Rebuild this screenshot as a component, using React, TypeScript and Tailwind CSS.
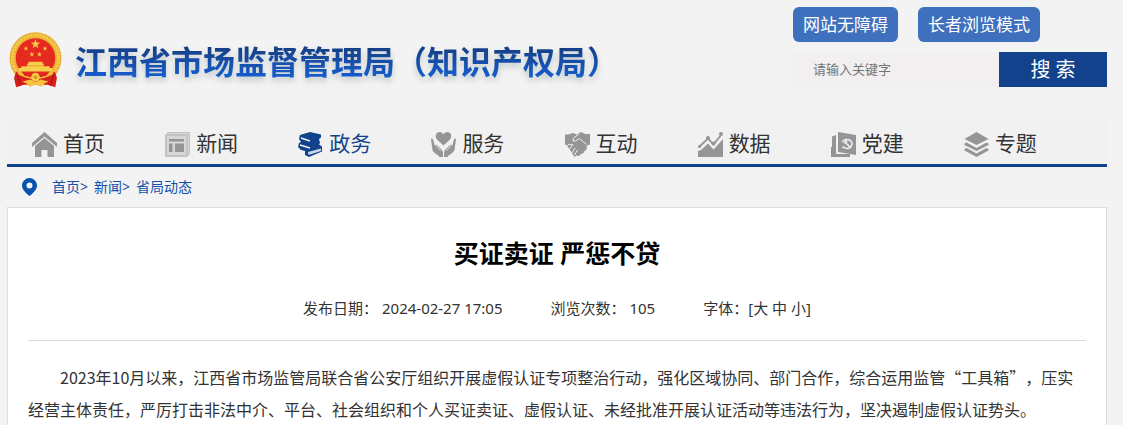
import type { ReactNode } from "react";

type NavItem = { title: string; icon: ReactNode; active?: boolean };

function Icon({ children }: { children: ReactNode }) {
  return (
    <svg
      viewBox="0 0 25 25"
      className="size-[25px] shrink-0"
      fill="currentColor"
      aria-hidden="true"
    >
      {children}
    </svg>
  );
}

const navItems: NavItem[] = [
  {
    title: "首页",
    icon: (
      <Icon>
        <path d="M12.500 0 25 11v4L12.500 4.500 0 15v-4Z" />
        <path d="M12.500 6 22 14v11h-6.500v-7h-6v7H3V14Z" />
      </Icon>
    ),
  },
  {
    title: "新闻",
    icon: (
      <Icon>
        <path d="M0 3 3 0h22v22l-3 3H0Z" opacity=".5" />
        <path d="M2 4h19v19H2Z" fill="#d6d6d6" />
        <path d="M3.500 1.500h20v20" stroke="#d6d6d6" strokeWidth="1" fill="none" />
        <path d="M4 7h15v2.500H4ZM4 11.500h3.500V20H4ZM10 11.500h9V20h-9Z" />
      </Icon>
    ),
  },
  {
    title: "政务",
    active: true,
    icon: (
      <Icon>
        <path d="m2 3 10-3 11 2.500v3L21 7l1 4-1 1.500 3 2v5L11 25l-4-2v-4l-4-1-3-3 1-4 2-1-2-3Z" />
        <path
          d="m3 6 9 3M2 13l10 3"
          stroke="#f1f1f1"
          strokeWidth="1.800"
          fill="none"
        />
        <path d="m10 20 13-3.500v2.500L10.500 23Z" fill="#c9d5e8" />
      </Icon>
    ),
  },
  {
    title: "服务",
    icon: (
      <Icon>
        <path d="M12.500 13.500 6 7.500C3.500 4 5 0 8.500 0c2 0 3.300 1 4 2.300C13.200 1 14.500 0 16.500 0 20 0 21.500 4 19 7.500Z" />
        <path d="M0 7.500c0-1.500 1.500-1 2 0l1.500 5L6 13l5 5c1 1 1 3 1 7H8.500C7 22 3 22 1.500 18Z" />
        <path d="M25 7.500c0-1.500-1.500-1-2 0l-1.500 5L19 13l-5 5c-1 1-1 3-1 7h3.500C18 22 22 22 23.500 18Z" />
        <path d="m3.500 12 6 6.500M21.500 12l-6 6.500" stroke="#f1f1f1" strokeWidth=".8" />
      </Icon>
    ),
  },
  {
    title: "互动",
    icon: (
      <Icon>
        <path d="M0 2.500h3L8 1l4 1.500L16 0l4 2h5v10.500l-3 1-.5 4-2 1.500-1 2-2.500 1L14 24l-3-.5L10 25l-2-2-1-2-2-3-2-3-3-3Z" />
        <path
          d="M13.500 2.500 8.500 6 8 9h2.500l4-2.500 7 6M2 14l2-2 2 1 1-1 1.500 1.500M4.500 17.500l2.500-4M7 21l3-5M9.500 23l3-5"
          stroke="#f1f1f1"
          strokeWidth="1"
          fill="none"
        />
      </Icon>
    ),
  },
  {
    title: "数据",
    icon: (
      <Icon>
        <path
          d="m1 15 9-8.500 5.500 6L23 3"
          stroke="currentColor"
          strokeWidth="1.800"
          fill="none"
        />
        <circle cx="10" cy="6" r="2" />
        <circle cx="15.500" cy="11.500" r="2" />
        <circle cx="23" cy="2" r="2" />
        <circle cx="1.500" cy="14.500" r="1.500" />
        <path d="m0 19 3-1 7-6.500 5.500 6L25 7v18H0Z" />
      </Icon>
    ),
  },
  {
    title: "党建",
    icon: (
      <Icon>
        <path d="M1 4.500 5 3v19h14v3H0V15h1Z" />
        <path d="m7 0 18 3v20L7 20Z" />
        <path
          d="M15 7.500c5-.5 7.500 3.500 5 7-2 2.500-5 2.500-8 .5M11.500 16l1.500-1.500M11 10l3-2.500 1.500 2-2.500 1.500M14 10l6 6"
          stroke="#f1f1f1"
          strokeWidth="1.500"
          fill="none"
        />
      </Icon>
    ),
  },
  {
    title: "专题",
    icon: (
      <Icon>
        <path d="m12.500 0 12 7-12 6-12-6Z" />
        <path d="m.5 11.500 2-1 10 5.500 10-5.500 2 1v1.500l-12 6-12-6Z" />
        <path d="m.5 17 2-1 10 5.500 10-5.500 2 1v1.500l-12 6.500-12-6.500Z" />
      </Icon>
    ),
  },
];

const crumbs = ["首页", "新闻", "省局动态"];

function Star({ x, y, r }: { x: number; y: number; r: number }) {
  return (
    <path
      transform={`translate(${x} ${y}) scale(${r})`}
      d="M0-1 .24-.32.95-.31.38.12.59.81 0 .4-.59.81-.38.12-.95-.31-.24-.32Z"
      fill="#f6c945"
    />
  );
}

function Emblem() {
  return (
    <svg viewBox="25 36 160 170" className="h-14 w-[53px] shrink-0" aria-hidden="true">
      <circle cx="105" cy="116" r="79" fill="#e9b233" />
      <circle cx="105" cy="116" r="70" fill="none" stroke="#f5cc50" strokeWidth="9" strokeDasharray="7 3" />
      <circle cx="105" cy="115" r="60" fill="#e62a20" />
      <path d="m46 156 24 12 35 8 35-8 24-12 6 20-5 28-24-8H70l-24 8-6-28Z" fill="#d81e1a" />
      <Star x={105} y={73} r={15} />
      <Star x={76} y={86} r={8} />
      <Star x={134} y={86} r={8} />
      <Star x={94} y={104} r={8} />
      <Star x={117} y={104} r={8} />
      <path d="M84 126h42v6h4v8h18v5h8v11H54v-11h8v-5h18v-8h4Z" fill="#f8cf4c" />
      <path d="M80 139h50" stroke="#dc8a25" strokeWidth="2" />
      <path d="M48 152q57 38 114 0l-5 14q-52 26-104 0Z" fill="#efb936" />
      <path d="M66 159q39 18 78 0l-5 9q-34 12-68 0Z" fill="#dc241c" />
      <circle cx="105" cy="173" r="13" fill="#f6c945" />
      <circle cx="105" cy="173" r="5" fill="#d99126" />
      <path d="m65 186 25-6 15 8 15-8 25 6-13 6-9 10-18-6-18 6-9-10Z" fill="#f5c33e" />
      <path d="m50 165 9 34M160 165l-9 34" stroke="#ac1717" strokeWidth="4" />
    </svg>
  );
}

function Header() {
  return (
    <header className="flex justify-between pt-[7px]">
      <div className="mt-[25px] flex h-14 items-center gap-[13px] pl-[2px]">
        <Emblem />
        <h1 className="bg-linear-to-b from-[#153f85] from-25% to-[#155ccb] to-80% bg-clip-text pt-1 text-[32px] leading-[48px] font-bold whitespace-nowrap text-transparent drop-shadow-[0_4px_3px_rgba(80,100,100,0.3)]">
          江西省市场监督管理局（知识产权局）
        </h1>
      </div>
      <div className="w-[314px]">
        <div className="flex gap-5 text-[17px] leading-[34px] text-white">
          <button className="h-[35px] rounded-md bg-[#3f70bd] px-[10px]">网站无障碍</button>
          <button className="h-[35px] rounded-md bg-[#3f70bd] px-[10px]">长者浏览模式</button>
        </div>
        <form className="mt-[10px] flex h-[35px]" onSubmit={(e) => e.preventDefault()}>
          <input
            type="text"
            aria-label="请输入关键字"
            placeholder="请输入关键字"
            className="min-w-0 grow bg-[#f1eff0] px-5 text-[13px] placeholder:text-[#757575] outline-none"
          />
          <button className="w-[108px] shrink-0 bg-[#12428c] text-[20px] text-white">搜 索</button>
        </form>
      </div>
    </header>
  );
}

function App() {
  return (
    <div className="min-h-screen bg-[#f3f3f3] pr-4 pl-[7px] font-['Noto_Sans','Noto_Sans_CJK_SC',sans-serif] text-[#333]">
      <Header />
      <nav className="mt-8 border-b-[3px] border-[#12428c] bg-[#f1f1f1]">
        <ul className="grid h-[44px] grid-cols-8 pt-1 pr-[10px] pl-[25px]">
          {navItems.map((item) => (
            <li key={item.title}>
              <a
                href="#"
                className={`flex h-10 items-center gap-[6px] text-[21px] whitespace-nowrap ${item.active ? "text-[#12428c]" : ""}`}
              >
                <span className={item.active ? "" : "text-[#959595]"}>{item.icon}</span>
                {item.title}
              </a>
            </li>
          ))}
        </ul>
      </nav>
      <div className="flex h-10 items-center gap-[15px] pl-[15px] text-sm text-[#1450a8]">
        <svg viewBox="0 0 15 18" className="h-[18px] w-[15px]" aria-hidden="true">
          <path
            d="M7.500 0A7.500 7.500 0 0 1 15 7.500c0 3-2 6-7.500 10.500C2 13.500 0 10.500 0 7.500A7.500 7.500 0 0 1 7.500 0Zm0 4.500a3 3 0 1 0 0 6 3 3 0 0 0 0-6Z"
            fill="#0754ac"
          />
        </svg>
        <div className="flex gap-[6px]">
          {crumbs.map((crumb, i) => (
            <span key={crumb}>
              <a href="#">{crumb}</a>
              {i < crumbs.length - 1 && ">"}
            </span>
          ))}
        </div>
      </div>
      <main className="border border-b-0 border-[#dcdcdc] bg-white px-5 pt-[23px]">
        <h2 className="text-center text-[25px] leading-[44px] font-bold text-black">
          买证卖证 严惩不贷
        </h2>
        <div className="mt-[22px] flex justify-center gap-12 border-b border-[#dcdcdc] pb-[21px] text-[15px] leading-[22px]">
          <span>发布日期： 2024-02-27 17:05</span>
          <span>浏览次数： 105</span>
          <span>
            字体：[<button>大</button> <button>中</button> <button>小</button>]
          </span>
        </div>
        <p className="mt-5 indent-8 font-['Noto_Sans_CJK_SC',sans-serif] text-base leading-8 [text-spacing-trim:space-all]">
          2023年10月以来，江西省市场监管局联合省公安厅组织开展虚假认证专项整治行动，强化区域协同、部门合作，综合运用监管“工具箱”，压实经营主体责任，严厉打击非法中介、平台、社会组织和个人买证卖证、虚假认证、未经批准开展认证活动等违法行为，坚决遏制虚假认证势头。
        </p>
      </main>
    </div>
  );
}

export default App;
